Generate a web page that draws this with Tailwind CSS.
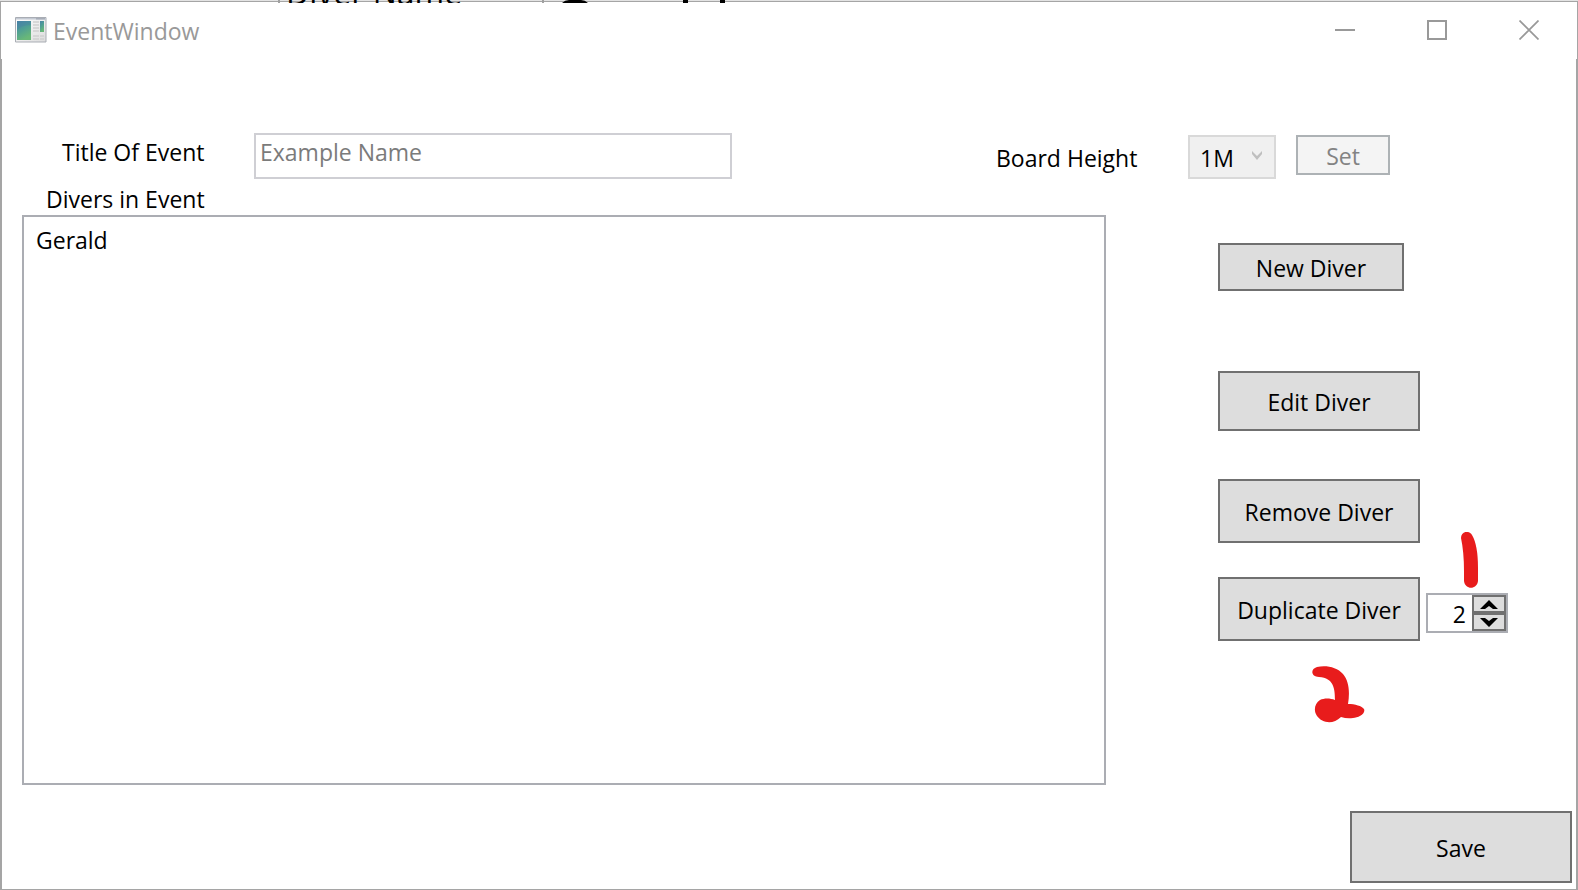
<!DOCTYPE html>
<html lang="en">
<head>
<meta charset="utf-8">
<title>EventWindow</title>
<script src="https://cdn.jsdelivr.net/npm/@tailwindcss/browser@4"></script>
</head>
<body class="bg-white">
<div class="relative flex min-h-screen flex-col font-['Open_Sans','Noto_Sans',sans-serif] text-[23px] leading-8 text-black">

  <!-- Edge of the window behind this one -->
  <div class="h-px bg-[#e3e3e3]"></div>
  <div aria-hidden="true" class="absolute left-0 top-0 h-[3px] w-full overflow-hidden">
    <div class="absolute bottom-0 left-[278px] h-[3px] w-[266px] border-x-2 border-[#a0a0a0]"></div>
    <div class="absolute bottom-[-10px] left-[286px] text-[32px] leading-10">Diver Name</div>
    <svg class="absolute left-[560px] top-0" width="170" height="3" viewBox="0 0 170 3"><path d="M2 3Q5 0 9 0H21Q25 0 28 3ZM123 0h5v3h-5zM160 0h5v3h-5z"/></svg>
  </div>

  <div class="flex flex-1 flex-col border border-[#a5a5a5]">
    <header class="flex h-[57px] shrink-0 items-start justify-between pl-[14px] pt-[10px] text-[#999]">
      <div class="flex items-start gap-[6px]">
        <svg class="mt-[5px]" width="32" height="26" viewBox="0 0 32 26" aria-hidden="true">
          <defs>
            <linearGradient id="pane" x1="0" y1="0" x2=".4" y2="1"><stop stop-color="#4a83a8"/><stop offset=".5" stop-color="#4f9f94"/><stop offset="1" stop-color="#69b878"/></linearGradient>
            <linearGradient id="frame" x1="0" y1="0" x2="1" y2="1"><stop stop-color="#fff"/><stop offset="1" stop-color="#dcdcdc"/></linearGradient>
          </defs>
          <path d="M.5.500h30.500v24.500H.5z" fill="url(#frame)" stroke="#a9adb4"/>
          <path d="M1 1h30v1.500H1z" fill="#c3c9d3"/><path d="M21 1h9v1.500h-9z" fill="#a7adb8"/>
          <path d="M2 4h14v19H2z" fill="url(#pane)"/>
          <path d="M2 14Q5 8 16 8V4H2z" fill="#447fa5" opacity=".35"/>
          <path d="M25 4h4v11h-4z" fill="url(#pane)"/>
          <path d="M18 5h6M18 8h6M18 11h6M18 14h6M18 19h6M18 22h6M25 19h4M25 22h4" stroke="#cfcfcf" stroke-width="1.500"/>
        </svg>
        <h1 class="pt-[3px]">EventWindow</h1>
      </div>
      <div class="flex pr-[2px]">
        <button type="button" aria-label="Minimize" class="flex h-9 w-[92px] items-center justify-center"><svg width="20" height="20" viewBox="0 0 20 20"><path d="M0 10h20" stroke="#999" stroke-width="2"/></svg></button>
        <button type="button" aria-label="Maximize" class="flex h-9 w-[92px] items-center justify-center"><svg width="20" height="20" viewBox="0 0 20 20"><path d="M1 1h18v18H1z" fill="none" stroke="#999" stroke-width="2"/></svg></button>
        <button type="button" aria-label="Close" class="flex h-9 w-[92px] items-center justify-center"><svg width="20" height="20" viewBox="0 0 20 20"><path d="M.5.500l19 19M19.500.500l-19 19" fill="none" stroke="#999" stroke-width="1.700"/></svg></button>
      </div>
    </header>

    <main class="flex flex-1 flex-col border-x border-[#a5a5a5] pl-5 pt-[74px]">
      <div class="flex items-start justify-between pr-[186px]">
        <div class="flex items-start">
          <label for="title" class="w-[232px] pl-10 pt-[3px]">Title Of Event</label>
          <input id="title" type="text" value="Example Name" disabled class="h-[46px] w-[478px] border-2 border-[#cfcfd4] bg-white px-1 pb-2 text-[#7b7b7b]">
        </div>
        <div class="flex items-start pt-[2px]">
          <label for="height" class="w-[192px] pt-[7px]">Board Height</label>
          <div class="relative">
            <select id="height" disabled class="h-11 w-[88px] appearance-none border-2 border-[#d9d9d9] bg-[#f0f0f0] pl-[10px] pt-0.5 text-black opacity-100"><option>1M</option></select>
            <svg class="pointer-events-none absolute left-16 top-4" width="10" height="10" viewBox="0 0 10 10"><path d="M0 0l5 5 5-5v3L5 9 0 3z" fill="#bfbfbf"/></svg>
          </div>
          <button type="button" disabled class="ml-5 h-10 w-[94px] border-2 border-[#adb2b5] bg-[#f4f4f4] pt-0.5 text-[#838383]">Set</button>
        </div>
      </div>

      <h2 id="divers" class="pl-6 pt-1">Divers in Event</h2>

      <div class="flex flex-1">
        <ul aria-labelledby="divers" class="h-[570px] flex-1 border-2 border-[#abadb3] px-3 py-[7px]">
          <li>Gerald</li>
        </ul>
        <div class="flex w-[470px] flex-col pt-7">
          <button type="button" class="ml-28 h-12 w-[186px] border-2 border-[#707070] bg-[#ddd] pt-0.5">New Diver</button>
          <button type="button" class="ml-28 mt-20 h-[60px] w-[202px] border-2 border-[#707070] bg-[#ddd] pt-0.5">Edit Diver</button>
          <button type="button" class="ml-28 mt-12 h-16 w-[202px] border-2 border-[#707070] bg-[#ddd] pt-0.5">Remove Diver</button>
          <div class="relative ml-28 mt-[34px] flex items-center gap-[6px]">
            <button type="button" class="h-16 w-[202px] border-2 border-[#707070] bg-[#ddd] pt-0.5">Duplicate Diver</button>
            <div class="mt-2 flex h-10 w-[82px] border-2 border-[#abadb3]">
              <input type="text" inputmode="numeric" aria-label="Number of copies" value="2" class="w-11 pr-[6px] pt-px text-right">
              <div class="flex flex-1 flex-col">
                <button type="button" aria-label="Increase" class="flex flex-1 items-center justify-center border-2 border-[#707070] bg-[#ddd]"><svg width="18" height="9" viewBox="0 0 18 9"><path d="M0 9L9 0l9 9h-5L9 6 5 9z"/></svg></button>
                <button type="button" aria-label="Decrease" class="flex flex-1 items-center justify-center border-2 border-[#707070] bg-[#ddd]"><svg width="18" height="9" viewBox="0 0 18 9"><path d="M0 0h5l4 3 4-3h5L9 9z"/></svg></button>
              </div>
            </div>
            <!-- Hand-drawn step marks -->
            <svg class="absolute left-[243px] top-[-45px]" width="18" height="56" viewBox="0 0 18 56" fill="#e81c1c" aria-label="1"><path d="M0 6C0-1 8-2 11 3Q17 13 17 36V49C16 58 4 58 3 49V39Q3 20 0 6Z"/></svg>
            <svg class="absolute left-[94px] top-[88px]" width="54" height="58" viewBox="0 0 54 58" fill="#e81c1c" aria-label="2"><path d="M5 2C14 0 25 2 31 9C37 16 38 27 36 39C43 39 50 41 52 44C54 49 46 53 41 53Q35 54 29 52C21 60 10 58 5 51C1 45 3 38 8 35C12 33 18 33 23 35C23 24 22 13 7 12C-1 12-2 4 5 2Z"/></svg>
          </div>
        </div>
      </div>

      <div class="flex justify-end pb-[6px] pr-1 pt-[25px]">
        <button type="button" class="h-[72px] w-[222px] border-2 border-[#707070] bg-[#ddd] pt-0.5">Save</button>
      </div>
    </main>
  </div>
</div>
</body>
</html>
